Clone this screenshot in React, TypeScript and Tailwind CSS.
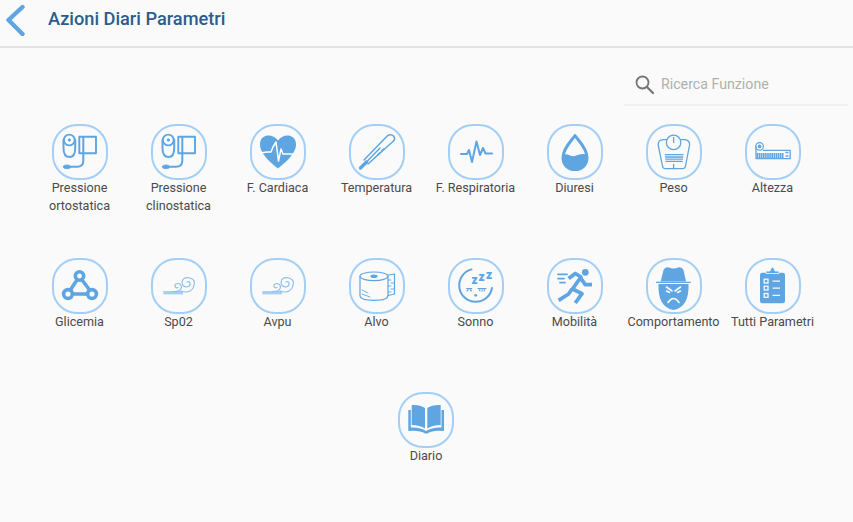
import React from "react";

const BLUE = "#5fa5e2";
const BG = "#fafafa";

// line icons share these attributes
const line = {
  fill: "none",
  stroke: BLUE,
  strokeWidth: 1.6,
  strokeLinecap: "round" as const,
  strokeLinejoin: "round" as const,
};

const Stethoscope = () => (
  <g {...line}>
    <path d="M11.5 16 V24 Q11.5 33 17.5 33 Q23.2 33 23.2 24 V16" strokeWidth="2" />
    <circle cx="17.3" cy="16" r="5.4" fill={BG} strokeWidth="1.9" />
    <circle cx="17.3" cy="16" r="1.2" fill={BLUE} strokeWidth="0.8" />
    <rect x="27.3" y="12.7" width="16.7" height="16.5" strokeWidth="1.9" />
    <path d="M31.3 13 V37 Q31.3 42.7 25 42.7 H19" strokeWidth="2" />
    <ellipse cx="15" cy="42.8" rx="3.8" ry="1.9" fill={BLUE} strokeWidth="0.8" />
  </g>
);

const Heart = () => (
  <g>
    <path
      d="M28 44.5 C24 41 10 31 10 20.5 C10 14 14.5 11.5 18.5 11.5 C22.5 11.5 26 13.5 28 16.5 C30 13.5 33.5 11.5 37.5 11.5 C41.5 11.5 46 14 46 20.5 C46 31 32 41 28 44.5 Z"
      fill={BLUE}
    />
    <path
      d="M10 29 L17 28 H21 L23 23 L26 18 L28.5 37 L31 25 L33 30 H44"
      fill="none"
      stroke="#fff"
      strokeWidth="1.5"
      strokeLinejoin="round"
    />
  </g>
);

const Thermometer = () => (
  <g {...line}>
    <path d="M15 36 L38.4 11.8 Q42 9.5 44.5 12 Q46.5 14.5 45 16.5 L19 40" strokeWidth="1.5" />
    <path d="M11.5 44 L17.5 38" strokeWidth="3.4" />
    <path d="M17.5 38 L31 24" strokeWidth="1.4" />
    <path d="M24 35 L26.5 32.5 M28 31 L30.5 28.5 M32 27 L34.5 24.5" strokeWidth="1" />
  </g>
);

const Pulse = () => (
  <path
    {...line}
    strokeWidth="2"
    d="M13 30 H19 L21 26 L24 38 L28.5 17.5 L32 31 L35 24 L37.5 29.5 H44"
  />
);

const Drop = () => (
  <g>
    <path
      d="M28 11.5 C25 16 16 24 16 33.5 C16 41 21 45.5 28 45.5 C35 45.5 40 41 40 33.5 C40 24 31 16 28 11.5 Z"
      fill="none"
      stroke={BLUE}
      strokeWidth="3"
      strokeLinejoin="round"
    />
    <path
      d="M15 31.5 C20 28 24 33.5 28 32 C32 30.5 36 28.5 41 31.5 C42 40 35 46 28 46 C21 46 14 40 15 31.5 Z"
      fill={BLUE}
    />
  </g>
);

const Scale = () => (
  <g {...line} strokeWidth="1.3">
    <path d="M17 15.7 H38.5 Q44 16 43.6 21 L39.5 42 Q39 44.7 36.5 44.7 H19.5 Q17 44.7 16.5 42 L12.2 21 Q12 16 17 15.7 Z" />
    <circle cx="27.6" cy="18.4" r="7.2" fill={BG} />
    <path d="M27.6 18.4 V13.5" />
    <path d="M19.3 30.7 H37 M19.5 33 H36.8 M19.8 35.2 H36.5 M20 37.4 H36.2 M27.6 40.5 V44.7" />
  </g>
);

const Tape = () => (
  <g {...line} strokeWidth="1.3">
    <circle cx="14.6" cy="22.4" r="3.8" />
    <circle cx="14.6" cy="22.4" r="1.2" fill={BLUE} />
    <path d="M11 23 V34.6 H45.2 V26.4 H18.4" />
    <path
      d="M12.5 29 V34 M14.6 29 V34 M16.7 29 V34 M18.8 29 V34 M20.9 29 V34 M23 29 V34 M25.1 29 V34 M27.2 29 V34 M29.3 29 V34 M31.4 29 V34 M33.5 29 V34 M35.6 29 V34 M37.7 29 V34 M40.5 28.5 H43.5 M40.5 32 H43.5"
      strokeWidth="1.6"
      strokeLinecap="butt"
    />
  </g>
);

const Triangle = () => (
  <g fill="none" stroke={BLUE} strokeWidth="3.6">
    <path d="M25.3 21.5 L18 32.5 M29.7 21.5 L38 32.5 M20 36 H36" />
    <circle cx="27.5" cy="18" r="4.2" />
    <circle cx="16" cy="36" r="4.4" />
    <circle cx="40" cy="36" r="4.4" />
  </g>
);

const Wind = () => (
  <g fill="none" stroke="#8dbfeb" strokeWidth="1.2" strokeLinecap="round">
    <path d="M12.3 34.7 H32" strokeWidth="3.4" strokeLinecap="butt" stroke="#a9cff0" />
    <path d="M30 33 Q38 36 42 30 Q46 22 39 20 Q32 18.5 31 24 Q31 29 36 29 Q39.5 28.5 39 25 Q38 23 36 24" />
    <path d="M22 33.5 Q30 34 30.5 29 Q30 25.5 26.5 25.5 Q23.5 26 24 28.5 Q25 30.5 27 29.5" />
  </g>
);

const Roll = () => (
  <g {...line} strokeWidth="1.2">
    <ellipse cx="25" cy="18.3" rx="14" ry="4.3" />
    <ellipse cx="25" cy="18.3" rx="3" ry="1.2" fill={BLUE} />
    <path d="M11 18.3 V37.5 Q11 42.3 25 42.3 Q39 42.3 39 37.5 V18.3" />
    <path d="M39 17 L45.5 16 V36 L39 37.5" />
    <path d="M39 22 H42 M42 25 H45.5 M39 28 H42 M42 31 H45.5 M39 34 H42" strokeWidth="0.9" />
    <path d="M13 32 L19 35 M13 36 L21 39" strokeWidth="0.9" />
  </g>
);

const Sleep = () => (
  <g>
    <path {...line} strokeWidth="2" d="M23.5 11.4 A16.5 16.5 0 1 0 44 30" />
    <text x="23.5" y="25.5" fontFamily="Roboto, sans-serif" fontWeight="900" fontSize="12" fill={BLUE}>z</text>
    <text x="30.5" y="23" fontFamily="Roboto, sans-serif" fontWeight="900" fontSize="12" fill={BLUE}>z</text>
    <text x="38" y="21" fontFamily="Roboto, sans-serif" fontWeight="900" fontSize="12" fill={BLUE}>z</text>
    <path d="M18.7 30.6 H23.7 M30 30.6 H38 M19 33 L20 32 M22.5 32 L23.5 33 M31.5 32 L32 33 M34 32 V33 M36.5 32 L36 33" {...line} strokeWidth="1.1" />
    <circle cx="27.7" cy="37.3" r="1.4" fill={BLUE} />
  </g>
);

const Runner = () => (
  <g>
    <circle cx="38.3" cy="14.3" r="3.4" fill={BLUE} />
    <path
      d="M21.6 20.6 L28.3 15.5 L34 19 L25.5 31 L35 35.6 L28.3 45 M25 31 L21.6 36 L11.6 42.3 M34 20.6 L38.3 26.6 L45 26.6"
      fill="none"
      stroke={BLUE}
      strokeWidth="3.8"
      strokeLinejoin="round"
    />
    <path d="M11 16.3 H20 M11 20.6 H17 M13 24.6 H18" {...line} strokeWidth="1.8" />
  </g>
);

const Detective = () => (
  <g>
    <path d="M14.7 23.5 L17.5 12 Q19 8.5 23 9.5 Q27.5 11.5 32 9.5 Q36 8.5 37.5 12 L40 23.5 Z" fill={BLUE} />
    <path d="M10 24.3 H44.7" stroke={BLUE} strokeWidth="1.2" />
    <path d="M12.5 26 H42.5 Q43.5 49 27.5 52 Q11.5 49 12.5 26 Z" fill={BLUE} />
    <path
      d="M20.5 29 L26 33 M34.5 29 L29 33 M20.5 33 L23.5 34.5 M34.5 33 L31.5 34.5 M22 44.5 Q27.5 36.5 33 44.5"
      fill="none"
      stroke={BG}
      strokeWidth="1.6"
      strokeLinecap="round"
    />
  </g>
);

const Clipboard = () => (
  <g>
    <rect x="15" y="14.7" width="25" height="30.6" rx="2.2" fill={BLUE} />
    <path d="M21 15.5 V13 H25 Q26 9.3 27.5 9.3 Q29 9.3 30 13 H34 V15.5 Z" fill={BLUE} stroke={BG} strokeWidth="0.8" />
    <g fill="none" stroke={BG} strokeWidth="1.3">
      <rect x="19.2" y="21.2" width="3.8" height="3.8" />
      <rect x="19.2" y="28.2" width="3.8" height="3.8" />
      <rect x="19.2" y="35.5" width="3.8" height="3.8" />
      <path d="M27.5 23.1 H35 M27.5 30.1 H35 M27.5 37.4 H35" />
    </g>
  </g>
);

const Book = () => (
  <g>
    <path d="M13.7 13 Q22 12.5 27 16 V36.5 Q22 33 13.7 33 Z" fill={BLUE} />
    <path d="M42.7 13 Q34.5 12.5 29.3 16 V36.5 Q34.5 33 42.7 33 Z" fill={BLUE} />
    <path d="M10.3 18 V39 Q22 38 27 41.5 H29.3 Q34.5 38 46 39 V18 H43.5 V35.5 Q34 35 28 39 Q22 35 12.8 35.5 V18 Z" fill={BLUE} />
  </g>
);

const tiles: { label: React.ReactNode; icon: React.ReactNode }[] = [
  { label: <>Pressione<br />ortostatica</>, icon: <Stethoscope /> },
  { label: <>Pressione<br />clinostatica</>, icon: <Stethoscope /> },
  { label: "F. Cardiaca", icon: <Heart /> },
  { label: "Temperatura", icon: <Thermometer /> },
  { label: "F. Respiratoria", icon: <Pulse /> },
  { label: "Diuresi", icon: <Drop /> },
  { label: "Peso", icon: <Scale /> },
  { label: "Altezza", icon: <Tape /> },
  { label: "Glicemia", icon: <Triangle /> },
  { label: "Sp02", icon: <Wind /> },
  { label: "Avpu", icon: <Wind /> },
  { label: "Alvo", icon: <Roll /> },
  { label: "Sonno", icon: <Sleep /> },
  { label: "Mobilità", icon: <Runner /> },
  { label: "Comportamento", icon: <Detective /> },
  { label: "Tutti Parametri", icon: <Clipboard /> },
  { label: "Diario", icon: <Book /> },
];

function Tile({ label, icon }: { label: React.ReactNode; icon: React.ReactNode }) {
  return (
    <div className="w-[99px] h-[134px] flex flex-col items-center">
      <div className="w-14 h-14 shrink-0 rounded-[25px] border-2 border-[#a3cff6]">
        <svg viewBox="0 0 56 56" className="w-14 h-14 -m-[2px] block">
          {icon}
        </svg>
      </div>
      <div className="mt-[-1px] text-[12.6px] leading-[18px] text-[#4a4a4a] text-center whitespace-nowrap">
        {label}
      </div>
    </div>
  );
}

export default function App() {
  return (
    <div className="w-[853px] h-[522px] overflow-hidden bg-[#fafafa] font-['Roboto',sans-serif]">
      <header className="h-[48px] flex items-center border-b-2 border-[#e2e2e2]">
        <svg width="20" height="32" viewBox="0 0 20 32" className="ml-[5px] mb-[6px]">
          <path d="M17.5 3 L3.5 16 L17.5 30" fill="none" stroke={BLUE} strokeWidth="4.4" strokeLinecap="round" strokeLinejoin="round" />
        </svg>
        <h1 className="ml-[23px] mb-[8px] text-[18.2px] font-medium text-[#2c5d8f]">Azioni Diari Parametri</h1>
      </header>

      <div className="flex justify-end pr-[5px] pt-[13px]">
        <div className="w-[224px] h-[45px] pt-[4px] flex items-center border-b-2 border-[#f0f0f0]">
          <svg width="24" height="24" viewBox="0 0 24 24" className="ml-[8px]">
            <circle cx="10.5" cy="9.5" r="6" fill="none" stroke="#757575" strokeWidth="1.8" />
            <path d="M15 14 L21 20" stroke="#757575" strokeWidth="2.2" strokeLinecap="round" />
          </svg>
          <span className="ml-[5px] text-[14.2px] text-[#b0b0b0]">Ricerca Funzione</span>
        </div>
      </div>

      <div className="w-[792px] ml-[30px] mt-[18px] flex flex-wrap justify-center">
        {tiles.map((t, i) => (
          <Tile key={i} label={t.label} icon={t.icon} />
        ))}
      </div>
    </div>
  );
}
